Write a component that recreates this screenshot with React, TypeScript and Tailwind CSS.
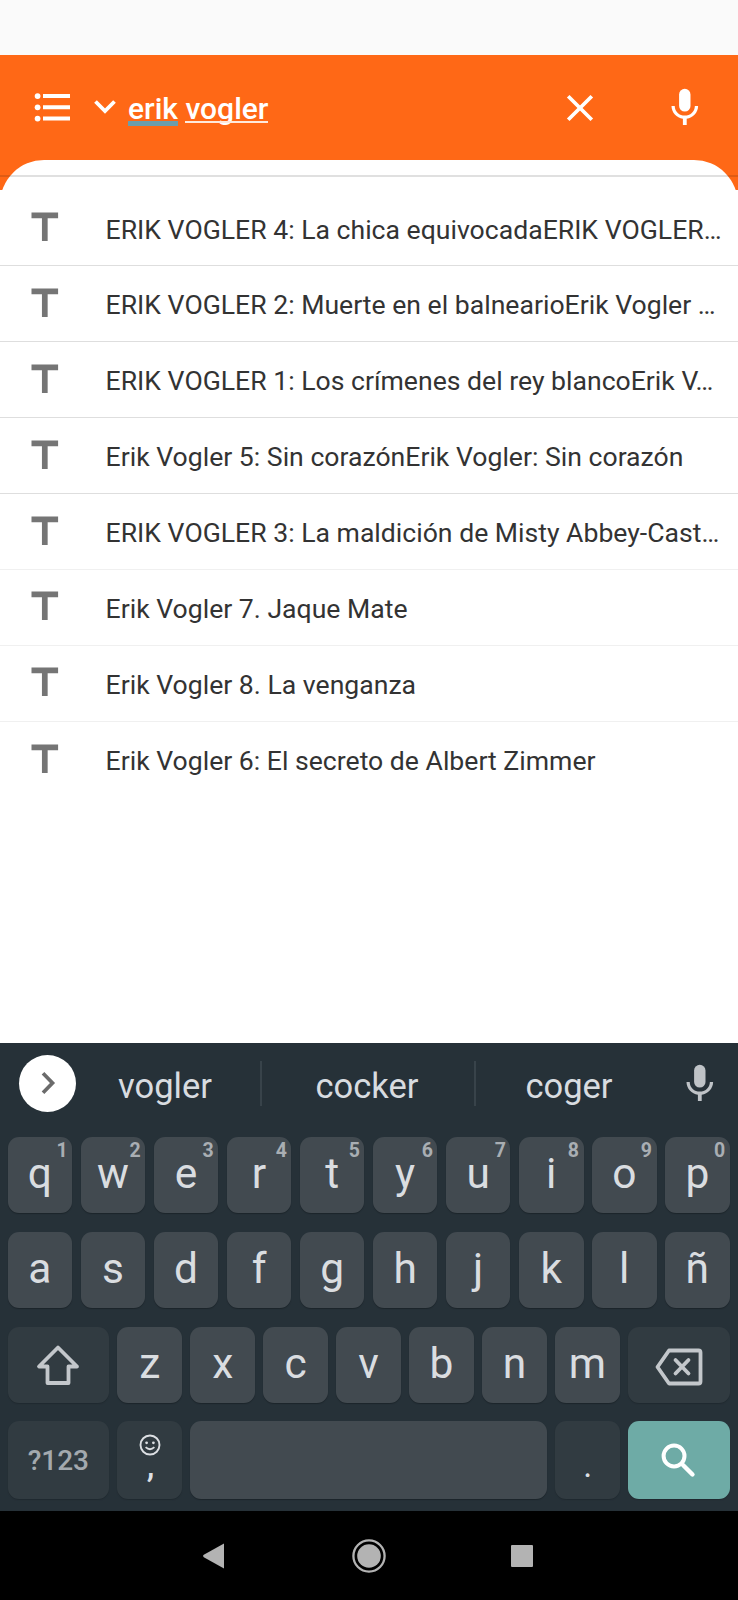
import React from 'react'
import { MdTitle } from 'react-icons/md'

interface KeyProps {
  label: string
  hint?: string
}

const suggestions = [
  'ERIK VOGLER 4: La chica equivocadaERIK VOGLER…',
  'ERIK VOGLER 2: Muerte en el balnearioErik Vogler …',
  'ERIK VOGLER 1: Los crímenes del rey blancoErik V…',
  'Erik Vogler 5: Sin corazónErik Vogler: Sin corazón',
  'ERIK VOGLER 3: La maldición de Misty Abbey-Cast…',
  'Erik Vogler 7. Jaque Mate',
  'Erik Vogler 8. La venganza',
  'Erik Vogler 6: El secreto de Albert Zimmer',
]

const topRow = ['q', 'w', 'e', 'r', 't', 'y', 'u', 'i', 'o', 'p']
const middleRow = ['a', 's', 'd', 'f', 'g', 'h', 'j', 'k', 'l', 'ñ']
const bottomRow = ['z', 'x', 'c', 'v', 'b', 'n', 'm']

const MicIcon = ({ className }: { className: string }) => (
  <svg viewBox="0 0 24 24" fill="currentColor" className={className}>
    <rect x="9" y="2" width="6" height="12" rx="3" />
    <path d="M17.3 11c0 3-2.54 5.1-5.3 5.1S6.7 14 6.7 11H5c0 3.41 2.72 6.23 6 6.72V21h2v-3.28c3.28-.48 6-3.3 6-6.72z" />
  </svg>
)

const Key = ({ label, hint }: KeyProps) => (
  <button className="relative flex h-[76px] w-[64.6px] shrink-0 justify-center rounded-[11px] bg-[#424a50] text-[42.5px] leading-[74px] text-[#dadde0] shadow-[0_1px_1px_#1c252b]">
    {label}
    {hint && (
      <span className="absolute top-[4px] right-[4.5px] text-[19.5px] leading-[20px] font-bold text-[#a9aeb3]">{hint}</span>
    )}
  </button>
)

const SearchHeader = () => (
  <header className="relative h-[135px] bg-[#ff6816] text-white">
    <div className="flex h-[105px] items-center">
      <svg viewBox="0 0 37 30" fill="currentColor" className="ml-[34px] h-[30px] w-[37px]">
        <circle cx="3.6" cy="4.1" r="2.9" />
        <circle cx="3.6" cy="15.3" r="2.9" />
        <circle cx="3.6" cy="26.6" r="2.9" />
        <path d="M9 2.1h27v4H9zM9 13.3h27v4H9zM9 24.6h27v4H9z" />
      </svg>
      <svg viewBox="0 0 24 16" fill="none" stroke="currentColor" strokeWidth="3.8" className="ml-[22px] h-[16px] w-[24px]">
        <path d="M2.5 2.5l9.5 9.5 9.5-9.5" />
      </svg>
      <div className="mt-[4px] ml-[11px] w-[428px] text-[30px] leading-[34px] font-medium whitespace-nowrap">
        <span className="relative inline-block">
          erik
          <span className="absolute bottom-0 left-0 h-[5px] w-full bg-[#6d9dab]" />
        </span>{' '}
        <span className="relative inline-block">
          vogler
          <span className="absolute bottom-[3px] left-0 h-[2px] w-full bg-[#ffe9dc]" />
        </span>
      </div>
      <svg
        viewBox="0 0 28 28"
        fill="none"
        stroke="currentColor"
        strokeWidth="3.7"
        className="mt-[1px] ml-[10px] h-[28px] w-[28px]"
      >
        <path d="M2.2 2.2l23.6 23.6M25.8 2.2L2.2 25.8" />
      </svg>
      <MicIcon className="mt-[1px] ml-[68px] h-[45.6px] w-[45.6px]" />
    </div>
    <div className="h-[30px] overflow-hidden">
      <div className="h-[60px] rounded-t-[44px] bg-white" />
    </div>
    <div className="absolute top-[120px] h-[2px] w-full bg-black/12" />
  </header>
)

const Keyboard = () => (
  <section className="h-[468px] bg-[#263138] pr-[8.4px] pl-[7.6px]">
    <div className="flex h-[94px] items-center text-[34.5px] text-[#d8dce0]">
      <div className="mb-[13.5px] ml-[11.4px] flex h-[57px] w-[57px] items-center justify-center rounded-full bg-white">
        <svg viewBox="0 0 16 24" fill="none" stroke="#6b6b6b" strokeWidth="3.7" className="ml-[1px] h-[24px] w-[16px]">
          <path d="M3 2.2l9.5 9.8L3 21.8" />
        </svg>
      </div>
      <span className="mb-[6px] w-[184px] pr-[6px] text-center">vogler</span>
      <span className="mb-[14px] h-[45px] w-[2px] bg-[#38434a]" />
      <span className="mb-[6px] w-[212px] pr-[2px] text-center">cocker</span>
      <span className="mb-[14px] h-[45px] w-[2px] bg-[#38434a]" />
      <span className="mb-[6px] w-[187px] pr-[1px] text-center">coger</span>
      <MicIcon className="mb-[12px] ml-[14px] h-[45.6px] w-[45.6px] shrink-0 text-[#bfc3c7]" />
    </div>
    <div className="flex flex-col gap-[18.8px]">
      <div className="flex justify-between">
        {topRow.map((letter, i) => (
          <Key key={letter} label={letter} hint={String((i + 1) % 10)} />
        ))}
      </div>
      <div className="flex justify-between">
        {middleRow.map((letter) => (
          <Key key={letter} label={letter} />
        ))}
      </div>
      <div className="flex justify-between">
        <button className="flex h-[76px] w-[101.5px] items-center justify-center rounded-[11px] bg-[#313b41] shadow-[0_1px_1px_#202a30]">
          <svg
            viewBox="0 0 44 42"
            fill="none"
            stroke="#c3c7cb"
            strokeWidth="3.8"
            strokeLinejoin="round"
            className="h-[42px] w-[44px]"
          >
            <path d="M22 3.5L3 22.5h8.5V39h21V22.5H41z" />
          </svg>
        </button>
        {bottomRow.map((letter) => (
          <Key key={letter} label={letter} />
        ))}
        <button className="flex h-[76px] w-[101.5px] items-center justify-center rounded-[11px] bg-[#313b41] shadow-[0_1px_1px_#202a30]">
          <svg
            viewBox="0 0 48 38"
            fill="none"
            stroke="#c3c7cb"
            strokeWidth="3.8"
            strokeLinejoin="round"
            className="mt-[4px] h-[38px] w-[48px]"
          >
            <path d="M14 2.5h29.5a2 2 0 0 1 2 2v29a2 2 0 0 1-2 2H14L2.5 19z" />
            <path d="M20.5 12l13 13.5M33.5 12l-13 13.5" strokeLinecap="round" />
          </svg>
        </button>
      </div>
      <div className="flex justify-between">
        <button className="h-[78px] w-[101.5px] rounded-[11px] bg-[#313b41] pt-[2px] text-[28px] font-medium text-[#a3a9ae] shadow-[0_1px_1px_#202a30]">
          ?123
        </button>
        <button className="flex h-[78px] w-[64.6px] flex-col items-center rounded-[11px] bg-[#313b41] pt-[13px] pl-[1px] text-[#dcdfe3] shadow-[0_1px_1px_#202a30]">
          <svg viewBox="0 0 22 22" fill="none" stroke="currentColor" className="h-[22px] w-[22px] shrink-0">
            <circle cx="11" cy="11" r="9.5" strokeWidth="1.9" />
            <circle cx="7.6" cy="8.8" r="1.4" fill="currentColor" stroke="none" />
            <circle cx="14.4" cy="8.8" r="1.4" fill="currentColor" stroke="none" />
            <path d="M6.6 13.2q4.4 4 8.8 0" strokeWidth="1.8" />
          </svg>
          <span className="pl-[1px] text-[34px] leading-[19px] font-medium">,</span>
        </button>
        <button className="h-[78px] w-[357.5px] rounded-[11px] bg-[#424a50] shadow-[0_1px_1px_#1c252b]" />
        <button className="flex h-[78px] w-[64.6px] justify-center rounded-[11px] bg-[#313b41] pt-[24px] text-[34px] leading-[40px] text-[#dcdfe3] shadow-[0_1px_1px_#202a30]">
          .
        </button>
        <button className="flex h-[78px] w-[101.5px] items-center justify-center rounded-[11px] bg-[#6eaba6] shadow-[0_1px_1px_#202a30]">
          <svg viewBox="0 0 24 24" fill="none" stroke="#fff" strokeWidth="2.1" className="h-[45.6px] w-[45.6px]">
            <circle cx="9.5" cy="9.5" r="5.5" />
            <path d="M14.2 14.2l5 5" strokeLinecap="round" strokeWidth="2.3" />
          </svg>
        </button>
      </div>
    </div>
  </section>
)

const NavigationBar = () => (
  <nav className="flex h-[89px] items-center bg-black text-[#b3b3b3]">
    <svg viewBox="0 0 22 26" fill="currentColor" className="ml-[203px] h-[26px] w-[22px]">
      <path d="M21 .5v25L.8 14.2q-1.4-1.2 0-2.4z" />
    </svg>
    <svg viewBox="0 0 34 34" fill="none" stroke="currentColor" className="ml-[126.5px] h-[34px] w-[34px]">
      <circle cx="17" cy="17" r="15.6" strokeWidth="2.3" />
      <circle cx="17" cy="17" r="11.8" fill="currentColor" stroke="none" />
    </svg>
    <div className="ml-[125.5px] h-[22px] w-[22px] rounded-[1px] bg-current" />
  </nav>
)

export default function App() {
  return (
    <div className="flex h-[1600px] w-[738px] flex-col overflow-hidden bg-white font-[Roboto,sans-serif]">
      <div className="h-[54.5px] shrink-0 bg-[#fafafa]" />
      <SearchHeader />
      <ul className="grow pt-[0.8px]">
        {suggestions.map((title, i) => (
          <li
            key={title}
            className={`flex h-[75.9px] items-center border-b pl-[22px] text-[26.6px] whitespace-nowrap text-[#333] last:border-0 ${i < 4 ? 'border-[#dedede]' : 'border-[#f0f0f0]'}`}
          >
            <MdTitle className="h-[45.6px] w-[45.6px] shrink-0 text-[#757575]" />
            <span className="mt-[3.5px] ml-[38px]">{title}</span>
          </li>
        ))}
      </ul>
      <Keyboard />
      <NavigationBar />
    </div>
  )
}
